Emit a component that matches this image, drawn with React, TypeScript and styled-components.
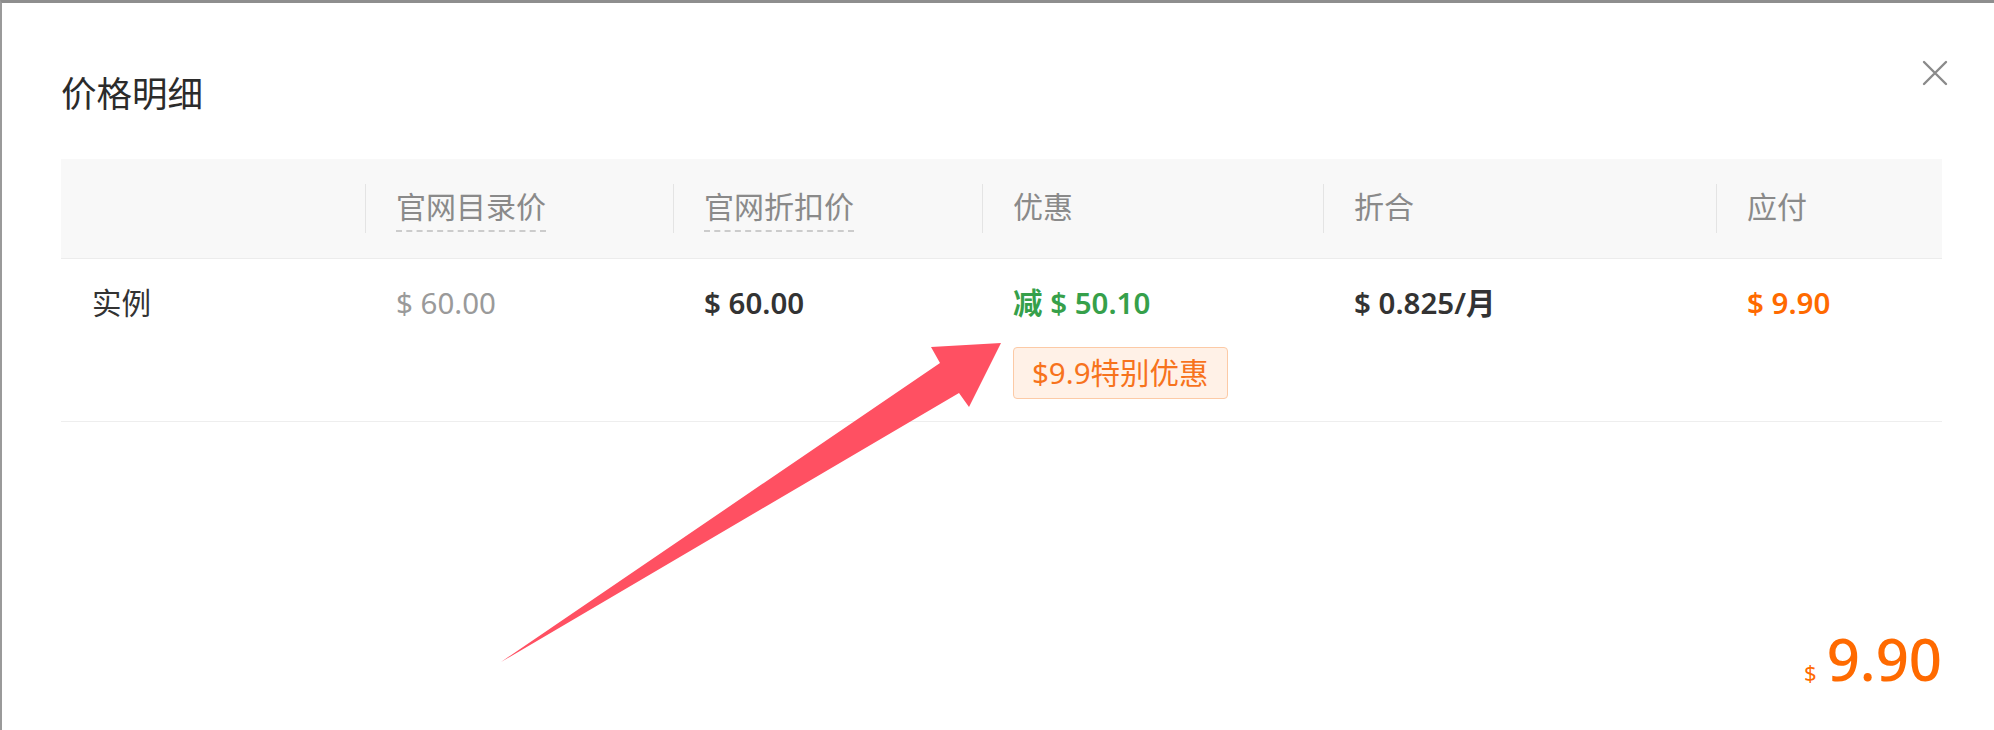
import React from 'react';
import styled, { createGlobalStyle } from 'styled-components';

const GlobalStyle = createGlobalStyle`
  html, body {
    margin: 0;
    padding: 0;
    background: #ffffff;
  }
  body {
    font-family: 'Noto Sans', 'Noto Sans CJK SC', sans-serif;
    color: #333;
  }
  * { box-sizing: border-box; }
`;

const columns = '304px 308px 309px 341px 393px 226px';

const headers = [
  { label: '', dashed: false },
  { label: '官网目录价', dashed: true },
  { label: '官网折扣价', dashed: true },
  { label: '优惠', dashed: false },
  { label: '折合', dashed: false },
  { label: '应付', dashed: false },
];

const App: React.FC = () => {
  return (
    <>
      <GlobalStyle />
      <Dialog>
        <TitleBar>
          <Title>价格明细</Title>
          <CloseButton aria-label="close">
            <svg width="26" height="26" viewBox="0 0 26 26">
              <path d="M2 2 L24 24 M24 2 L2 24" stroke="#8a8a8a" strokeWidth="2.4" strokeLinecap="round" fill="none" />
            </svg>
          </CloseButton>
        </TitleBar>

        <Table>
          <HeadRow>
            {headers.map((h, i) => (
              <HeadCell key={i} divider={i > 0}>
                {h.label && <HeadLabel dashed={h.dashed}>{h.label}</HeadLabel>}
              </HeadCell>
            ))}
          </HeadRow>
          <BodyRow>
            <Cell>实例</Cell>
            <Cell><Price tone="muted">$ 60.00</Price></Cell>
            <Cell><Price tone="strong">$ 60.00</Price></Cell>
            <Cell>
              <Price tone="green">减 $ 50.10</Price>
              <PromoTag>$9.9特别优惠</PromoTag>
            </Cell>
            <Cell><Price tone="strong">$ 0.825/月</Price></Cell>
            <Cell><Price tone="orange">$ 9.90</Price></Cell>
          </BodyRow>
        </Table>

        <Total>
          <TotalCurrency>$</TotalCurrency>
          <TotalAmount>9.90</TotalAmount>
        </Total>

        <Annotation width="1994" height="730" viewBox="0 0 1994 730">
          <polygon
            points="501,662 940,363 931,347 1001,343 969,407 959,393"
            fill="#ff5062"
          />
        </Annotation>
      </Dialog>
    </>
  );
};

const Dialog = styled.div`
  position: relative;
  width: 1994px;
  height: 730px;
  overflow: hidden;
  background: #ffffff;
  border-top: 3px solid #8e8e8e;
  border-left: 2px solid #9a9a9a;
  padding: 68px 52px 0 59px;
`;

const TitleBar = styled.div`
  display: flex;
  justify-content: space-between;
  align-items: flex-start;
`;

const Title = styled.h2`
  margin: 0;
  font-size: 35.5px;
  line-height: 44px;
  font-weight: 400;
  color: #2b2b2b;
`;

const CloseButton = styled.button`
  display: flex;
  margin: -11px -6px 0 0;
  padding: 0;
  border: none;
  background: transparent;
  cursor: pointer;
`;

const Table = styled.div`
  margin-top: 44px;
`;

const HeadRow = styled.div`
  display: grid;
  grid-template-columns: ${columns};
  height: 100px;
  background: #f8f8f8;
  border-bottom: 1px solid #ececec;
`;

const HeadCell = styled.div<{ divider: boolean }>`
  position: relative;
  padding: 31px 0 0 31px;

  &::before {
    content: '';
    display: ${p => (p.divider ? 'block' : 'none')};
    position: absolute;
    left: 0;
    top: 25px;
    width: 1px;
    height: 49px;
    background: #e4e4e4;
  }
`;

const HeadLabel = styled.span<{ dashed: boolean }>`
  display: inline-block;
  font-size: 30px;
  line-height: 34px;
  color: #8a8a8a;
  padding-bottom: 6px;
  border-bottom: 2px dashed ${p => (p.dashed ? '#cccccc' : 'transparent')};
`;

const BodyRow = styled.div`
  display: grid;
  grid-template-columns: ${columns};
  height: 163px;
  border-bottom: 1px solid #eeeeee;
`;

const Cell = styled.div`
  display: flex;
  flex-direction: column;
  align-items: flex-start;
  padding: 26px 0 0 31px;
  font-size: 29.5px;
  line-height: 36px;
  color: #333;
`;

const toneColor = {
  muted: '#9a9a9a',
  strong: '#333333',
  green: '#36a04a',
  orange: '#ff6a00',
};

const Price = styled.span<{ tone: keyof typeof toneColor }>`
  color: ${p => toneColor[p.tone]};
  font-weight: ${p => (p.tone === 'muted' ? 400 : 600)};
`;

const PromoTag = styled.span`
  margin-top: 26px;
  padding: 7px 18px;
  font-size: 29.5px;
  line-height: 36px;
  color: #f7731d;
  background: #fff1e7;
  border: 1px solid #fccaa6;
  border-radius: 4px;
`;

const Total = styled.div`
  display: flex;
  justify-content: flex-end;
  align-items: baseline;
  margin-top: 208px;
  color: #ff6a00;
`;

const TotalCurrency = styled.span`
  font-size: 22px;
  margin-right: 10px;
`;

const TotalAmount = styled.span`
  font-size: 58px;
  line-height: 1;
  font-weight: 500;
`;

const Annotation = styled.svg`
  position: absolute;
  top: -3px;
  left: -2px;
  pointer-events: none;
`;

export default App;
